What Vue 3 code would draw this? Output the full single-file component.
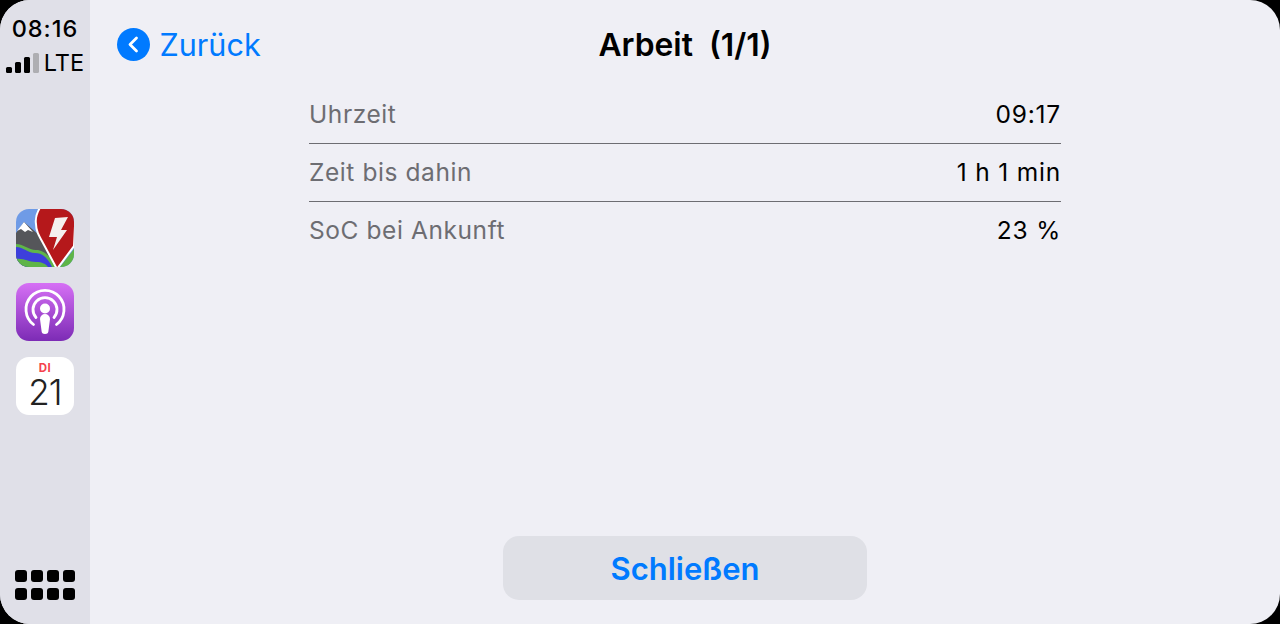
<script setup>
const rows = [
  { label: 'Uhrzeit', value: '09:17' },
  { label: 'Zeit bis dahin', value: '1 h 1 min' },
  { label: 'SoC bei Ankunft', value: '23 %' }
];
const dots = Array.from({ length: 8 });
</script>

<template>
  <div class="screen">
    <aside class="dock">
      <div class="status">
        <div class="time">08:16</div>
        <div class="signal">
          <span class="bars">
            <i class="b1"></i><i class="b2"></i><i class="b3"></i><i class="b4"></i>
          </span>
          <span class="lte">LTE</span>
        </div>
      </div>

      <div class="apps">
        <svg class="app" viewBox="0 0 58 58">
          <defs>
            <clipPath id="appClip"><rect width="58" height="58" rx="13" /></clipPath>
            <linearGradient id="podBg" x1="0" y1="0" x2="0" y2="1">
              <stop offset="0" stop-color="#d670f5" />
              <stop offset="1" stop-color="#7c2bb5" />
            </linearGradient>
          </defs>
          <g clip-path="url(#appClip)">
            <rect width="58" height="58" fill="#6f9be6" />
            <path d="M0 24 L8 13 L30 32 L44 58 L0 58Z" fill="#55565a" />
            <path d="M8 13 L1 22 L5 20 L9 23 L12 21 L17 23Z" fill="#fff" />
            <path d="M0 35 C8 35 12 41 20 41 C27 41 30 45 36 50 L42 58 L0 58Z" fill="#5fb548" />
            <path d="M0 38 C8 38 11 44 19 44 C26 44 30 48 34 54 L36 58 L0 58Z" fill="#3d3fdc" />
            <path d="M0 50 C8 49 12 53 20 53 C26 53 30 55 32 58 L0 58Z" fill="#5fb548" />
            <path d="M44 58 L58 40 L58 58Z" fill="#5fb548" />
            <path d="M25 -3 C21 3 19 9 20 15 C20 22 23 27 27 34 L41 60 L58 37 L60 -3Z" fill="#b5181b" stroke="#fff" stroke-width="2" />
            <path d="M39 9 L52 8 L45 21 L51 21 L37 41 L41 28 L33 28Z" fill="#f4f0ee" />
          </g>
        </svg>

        <svg class="app" viewBox="0 0 58 58">
          <rect width="58" height="58" rx="13" fill="url(#podBg)" />
          <g fill="none" stroke="#fff" stroke-linecap="round">
            <path d="M17.5 41.5 A19 19 0 1 1 40.5 41.5" stroke-width="2.8" />
            <path d="M20 34.5 A12 12 0 1 1 38 34.5" stroke-width="2.8" />
          </g>
          <circle cx="29" cy="25.5" r="5" fill="#fff" />
          <path d="M24 36 a5 5 0 0 1 10 0 L32.5 47.5 a3.5 3.5 0 0 1 -7 0Z" fill="#fff" />
        </svg>

        <div class="calendar">
          <span class="cal-day">DI</span>
          <span class="cal-num">21</span>
        </div>
      </div>

      <div class="grid-btn">
        <span v-for="(d, i) in dots" :key="i"></span>
      </div>
    </aside>

    <main class="main">
      <header class="header">
        <div class="back">
          <svg class="back-icon" viewBox="0 0 33 33">
            <circle cx="16.5" cy="16.5" r="16.5" fill="#007aff" />
            <path d="M19.5 10 L13 16.5 L19.5 23" fill="none" stroke="#fff" stroke-width="2.8" stroke-linecap="round" stroke-linejoin="round" />
          </svg>
          <span>Zurück</span>
        </div>
        <h1 class="title">Arbeit&nbsp; (1/1)</h1>
      </header>

      <div class="rows">
        <div v-for="row in rows" :key="row.label" class="row">
          <span class="label">{{ row.label }}</span>
          <span class="value">{{ row.value }}</span>
        </div>
      </div>

      <button class="close" type="button">Schließen</button>
    </main>
  </div>
</template>

<style>
html,
body {
  margin: 0;
  background: #000;
}
</style>

<style scoped>
.screen {
  display: flex;
  width: 1280px;
  height: 624px;
  overflow: hidden;
  border-radius: 30px;
  background: #efeff5;
  font-family: Inter, "Liberation Sans", sans-serif;
}

.dock {
  display: flex;
  flex-direction: column;
  align-items: center;
  flex: none;
  width: 90px;
  background: #e0e0e8;
}

.status {
  display: flex;
  flex-direction: column;
  align-items: center;
  height: 209px;
  box-sizing: border-box;
  padding-top: 15px;
}

.time {
  font-size: 23.5px;
  line-height: 28px;
  font-weight: 500;
  letter-spacing: 1px;
  color: #000;
}

.signal {
  display: flex;
  align-items: flex-end;
  gap: 5px;
  margin-top: 9px;
  height: 22px;
}

.bars {
  display: flex;
  align-items: flex-end;
  gap: 3px;
  padding-bottom: 1px;
}

.bars i {
  display: block;
  width: 6px;
  border-radius: 1.5px;
  background: #000;
}

.bars .b1 { height: 6px; }
.bars .b2 { height: 11px; }
.bars .b3 { height: 16px; }
.bars .b4 { height: 20px; background: #aeaeb2; }

.lte {
  font-size: 23.5px;
  line-height: 22px;
  color: #000;
}

.apps {
  display: flex;
  flex-direction: column;
  gap: 16px;
}

.app {
  display: block;
  width: 58px;
  height: 58px;
}

.calendar {
  display: flex;
  flex-direction: column;
  align-items: center;
  width: 58px;
  height: 58px;
  border-radius: 13px;
  background: #fff;
}

.cal-day {
  margin-top: 5px;
  font-size: 11.5px;
  line-height: 12px;
  font-weight: 700;
  letter-spacing: 0.5px;
  color: #f5414b;
}

.cal-num {
  margin-top: 4px;
  font-size: 35px;
  line-height: 28px;
  font-weight: 300;
  letter-spacing: -1px;
  color: #222;
}

.grid-btn {
  display: grid;
  grid-template-columns: repeat(4, 12px);
  gap: 6px 4px;
  margin-top: auto;
  margin-bottom: 24px;
}

.grid-btn span {
  height: 12px;
  border-radius: 3px;
  background: #000;
}

.main {
  display: flex;
  flex-direction: column;
  align-items: center;
  flex: 1;
  min-width: 0;
}

.header {
  position: relative;
  display: flex;
  justify-content: center;
  align-items: center;
  width: 100%;
  height: 86px;
  padding-top: 4px;
  box-sizing: border-box;
}

.back {
  position: absolute;
  left: 27px;
  top: 28px;
  display: flex;
  align-items: center;
  gap: 9.5px;
  font-size: 30.6px;
  line-height: 33px;
  color: #007aff;
}

.back-icon {
  width: 33px;
  height: 33px;
}

.title {
  margin: 0;
  font-size: 31.8px;
  line-height: 36px;
  font-weight: 600;
  color: #000;
}

.rows {
  width: 752px;
}

.row {
  display: flex;
  justify-content: space-between;
  align-items: center;
  height: 58px;
  box-sizing: border-box;
  padding-bottom: 2px;
  border-bottom: 1px solid #6d6d72;
  font-size: 24.5px;
}

.row:last-child {
  border-bottom: none;
}

.label {
  color: #6d6d72;
  letter-spacing: 0.58px;
}

.value {
  color: #000;
  letter-spacing: 0.8px;
}

.close {
  width: 364px;
  height: 64px;
  margin-top: auto;
  margin-bottom: 24px;
  border: none;
  border-radius: 16px;
  background: #dfe0e6;
  font-family: inherit;
  font-size: 31px;
  font-weight: 600;
  color: #007aff;
}
</style>
